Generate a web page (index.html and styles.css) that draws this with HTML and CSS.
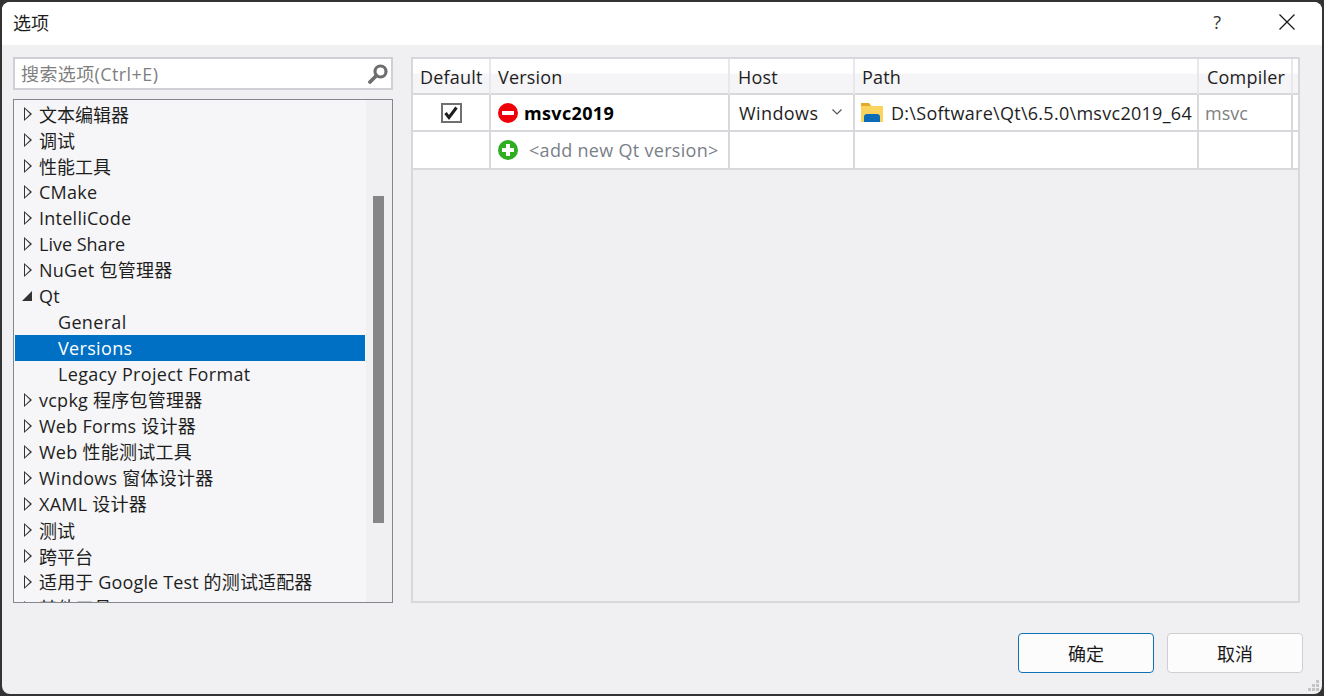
FILE: index.html
```html
<!DOCTYPE html>
<html lang="zh-CN">
<head>
    <meta charset="UTF-8" />
    <title>选项</title>
    <link rel="stylesheet" href="styles.css">
</head>
<body>
    <div class="window">
        <header class="titlebar">
            <span class="title">选项</span>
            <span class="help">?</span>
            <svg class="close" width="16" height="16" viewBox="0 0 16 16"><path d="M.5.5l15 15M15.500.5l-15 15" stroke="#1a1a1a" stroke-width="1.300" fill="none"/></svg>
        </header>
        <div class="content">
            <aside class="side">
                <div class="search">
                    <span class="search-text">搜索选项(Ctrl+E)</span>
                    <svg class="search-icon" width="20" height="20" viewBox="0 0 20 20"><circle cx="12.500" cy="7.500" r="5.500" fill="#fff" stroke="#6e6e6e" stroke-width="3.200"/><path d="M8.500 11.500L2 18" stroke="#6e6e6e" stroke-width="3.800" stroke-linecap="round"/></svg>
                </div>
                <div class="tree">
                    <ul class="tree-list">
                        <li class="row cn"><i class="arrow"></i>文本编辑器</li>
                        <li class="row cn"><i class="arrow"></i>调试</li>
                        <li class="row cn"><i class="arrow"></i>性能工具</li>
                        <li class="row"><i class="arrow"></i>CMake</li>
                        <li class="row"><i class="arrow"></i>IntelliCode</li>
                        <li class="row live"><i class="arrow"></i>Live Share</li>
                        <li class="row"><i class="arrow"></i>NuGet 包管理器</li>
                        <li class="row"><i class="arrow open"></i>Qt</li>
                        <li class="row child">General</li>
                        <li class="row child active">Versions</li>
                        <li class="row child">Legacy Project Format</li>
                        <li class="row"><i class="arrow"></i>vcpkg 程序包管理器</li>
                        <li class="row"><i class="arrow"></i>Web Forms 设计器</li>
                        <li class="row"><i class="arrow"></i>Web 性能测试工具</li>
                        <li class="row"><i class="arrow"></i>Windows 窗体设计器</li>
                        <li class="row"><i class="arrow"></i>XAML 设计器</li>
                        <li class="row cn"><i class="arrow"></i>测试</li>
                        <li class="row cn"><i class="arrow"></i>跨平台</li>
                        <li class="row long"><i class="arrow"></i>适用于 Google Test 的测试适配器</li>
                        <li class="row"><i class="arrow"></i>其他工具</li>
                    </ul>
                    <div class="scrollbar"><div class="thumb"></div></div>
                </div>
            </aside>
            <main class="versions">
                <div class="grid">
                    <div class="cell head">Default</div>
                    <div class="cell head">Version</div>
                    <div class="cell head">Host</div>
                    <div class="cell head">Path</div>
                    <div class="cell head">Compiler</div>
                    <div class="cell head last"></div>

                    <div class="cell center">
                        <span class="check"><svg width="16" height="16" viewBox="0 0 16 16"><path d="M2.500 8l3.500 4.500 7.500-10" stroke="#1e1e1e" stroke-width="3" fill="none"/></svg></span>
                    </div>
                    <div class="cell">
                        <svg class="status" width="20" height="20" viewBox="0 0 20 20"><circle cx="10" cy="10" r="10" fill="#f00008"/><rect x="4" y="8" width="12" height="4" fill="#fff"/></svg>
                        <b class="name">msvc2019</b>
                    </div>
                    <div class="cell host">Windows
                        <svg class="chevron" width="10" height="6" viewBox="0 0 10 6"><path d="M.5.500L5 5 9.500.5" stroke="#555" stroke-width="1.200" fill="none"/></svg>
                    </div>
                    <div class="cell path">
                        <svg class="folder" width="22" height="19" viewBox="0 0 22 19"><path d="M0 0h8l2 3h12v16H0z" fill="#fad45f"/><path d="M0 0h8l2 3H0z" fill="#e3a928"/><path d="M3 14q0-3 3-3h10q3 0 3 3v5H3z" fill="#0d6cb8"/></svg>
                        D:\Software\Qt\6.5.0\msvc2019_64
                    </div>
                    <div class="cell compiler">msvc</div>
                    <div class="cell last"></div>

                    <div class="cell"></div>
                    <div class="cell">
                        <svg class="status" width="20" height="20" viewBox="0 0 20 20"><circle cx="10" cy="10" r="10" fill="#2fae22"/><path d="M8 4h4v4h4v4h-4v4H8v-4H4V8h4z" fill="#fff"/></svg>
                        <span class="add">&lt;add new Qt version&gt;</span>
                    </div>
                    <div class="cell"></div>
                    <div class="cell"></div>
                    <div class="cell"></div>
                    <div class="cell last"></div>
                </div>
            </main>
        </div>
        <footer class="footer">
            <button class="btn primary">确定</button>
            <button class="btn">取消</button>
        </footer>
        <svg class="grip" width="12" height="12" viewBox="0 0 12 12"><path d="M8 0h3v3H8zM4 4h3v3H4zM8 4h3v3H8zM0 8h3v3H0zM4 8h3v3H4zM8 8h3v3H8z" fill="#c4c4c6"/></svg>
    </div>
</body>
</html>
```

FILE: styles.css
```css
*{
    box-sizing: border-box;
}
html,body{
    height: 100%;
}
body{
    margin: 0;
    padding: 2px;
    background: #333;
    overflow: hidden;
    font-family: "Open Sans", "Noto Sans CJK SC", sans-serif;
    font-size: 18px;
    color: #1e1e1e;
}
.window{
    height: 692px;
    background: #f0f0f2;
    border-radius: 8px;
    overflow: hidden;
    display: flex;
    flex-direction: column;
    position: relative;
}

/* title bar */
.titlebar{
    height: 43px;
    flex: none;
    background: #fff;
    display: flex;
    align-items: center;
    padding: 0 27px 4px 11px;
}
.title{
    flex: 1;
}
.help{
    margin-right: 58px;
    color: #333;
}

/* main */
.content{
    height: 558px;
    flex: none;
    display: flex;
    gap: 18px;
    padding: 12px 22px 0 11px;
}
.side{
    width: 380px;
    flex: none;
    display: flex;
    flex-direction: column;
    gap: 9px;
}
.search{
    height: 33px;
    flex: none;
    background: #fff;
    border: 2px solid #cfcfd6;
    display: flex;
    align-items: center;
    justify-content: space-between;
    padding: 0 3px 2px 6px;
    color: #7f7f7f;
    letter-spacing: .4px;
}
.search-icon{
    margin-top: 2px;
}
.tree{
    flex: 1;
    min-height: 0;
    border: 1px solid #828790;
    display: flex;
    overflow: hidden;
}
.tree-list{
    flex: 1;
    margin: 0;
    padding: 1px 1px 0;
    list-style: none;
    background: #f6f6f8;
    overflow: hidden;
}
.row{
    height: 26px;
    line-height: 26px;
    padding-left: 24px;
    white-space: nowrap;
    letter-spacing: .25px;
    position: relative;
}
.cn{
    line-height: 28px;
    letter-spacing: 0;
}
.live{
    letter-spacing: 0;
}
.long{
    letter-spacing: .15px;
}
.child{
    padding-left: 43px;
    letter-spacing: .33px;
}
.active{
    background: #0070c4;
    color: #fff;
}
.arrow{
    position: absolute;
    left: 9px;
    top: 6px;
    width: 0;
    height: 0;
    border-style: solid;
    border-width: 7px 0 7px 8px;
    border-color: transparent transparent transparent #333;
}
.arrow:after{
    content: "";
    position: absolute;
    left: -7px;
    top: -5px;
    border-style: solid;
    border-width: 5px 0 5px 5.500px;
    border-color: transparent transparent transparent #f6f6f8;
}
.arrow.open{
    left: 7px;
    top: 8px;
    border-width: 0 0 10px 10px;
    border-color: transparent transparent #333 transparent;
}
.arrow.open:after{
    display: none;
}
.scrollbar{
    width: 26px;
    flex: none;
    padding: 96px 7px 0;
}
.thumb{
    width: 11px;
    height: 327px;
    background: #868689;
}

/* versions table */
.versions{
    flex: 1;
    border: 2px solid #d8d8dc;
}
.grid{
    display: grid;
    grid-template-columns: 78px 239px 125px 344px 94px 1fr;
    grid-template-rows: 36px 37px 38px;
    background: #fff;
}
.cell{
    display: flex;
    align-items: center;
    padding-left: 7px;
    border-right: 2px solid #d8d8dc;
    border-bottom: 2px solid #d8d8dc;
    white-space: nowrap;
    overflow: hidden;
}
.head{
    background: linear-gradient(#fff 40%, #f5f5f7 45%);
    border-right-color: #e8e8ec;
    padding: 2px 0 0 7px;
    letter-spacing: .2px;
}
.head:nth-child(3),.head:nth-child(5){
    padding-left: 8px;
}
.last{
    border-right: 0;
    padding: 0;
}
.center{
    justify-content: center;
    padding: 0;
}
.check{
    width: 21px;
    height: 20px;
    border: 2px solid #707070;
    background: #fff;
    display: flex;
    align-items: center;
    justify-content: center;
}
.status{
    flex: none;
}
.name{
    margin-left: 6px;
    font-weight: 700;
    color: #000;
    letter-spacing: .35px;
}
.add{
    margin-left: 11px;
    color: #7a8088;
    letter-spacing: .3px;
}
.host{
    padding-left: 9px;
    letter-spacing: .4px;
}
.chevron{
    margin-left: 14px;
    margin-top: -2px;
}
.folder{
    flex: none;
    margin-right: 8px;
}
.path{
    padding-left: 6px;
    letter-spacing: .28px;
}
.compiler{
    color: #808080;
    padding-left: 6px;
}

/* buttons */
.footer{
    flex: 1;
    display: flex;
    justify-content: flex-end;
    align-items: flex-start;
    gap: 13px;
    padding: 30px 19px 0 0;
}
.btn{
    width: 136px;
    height: 40px;
    background: #fcfcfd;
    border: 1px solid #cfcfd3;
    border-radius: 4px;
    font: inherit;
    color: #1a1a1a;
}
.primary{
    border-color: #0e72b5;
}
.grip{
    position: absolute;
    right: 2px;
    bottom: 2px;
}
```
